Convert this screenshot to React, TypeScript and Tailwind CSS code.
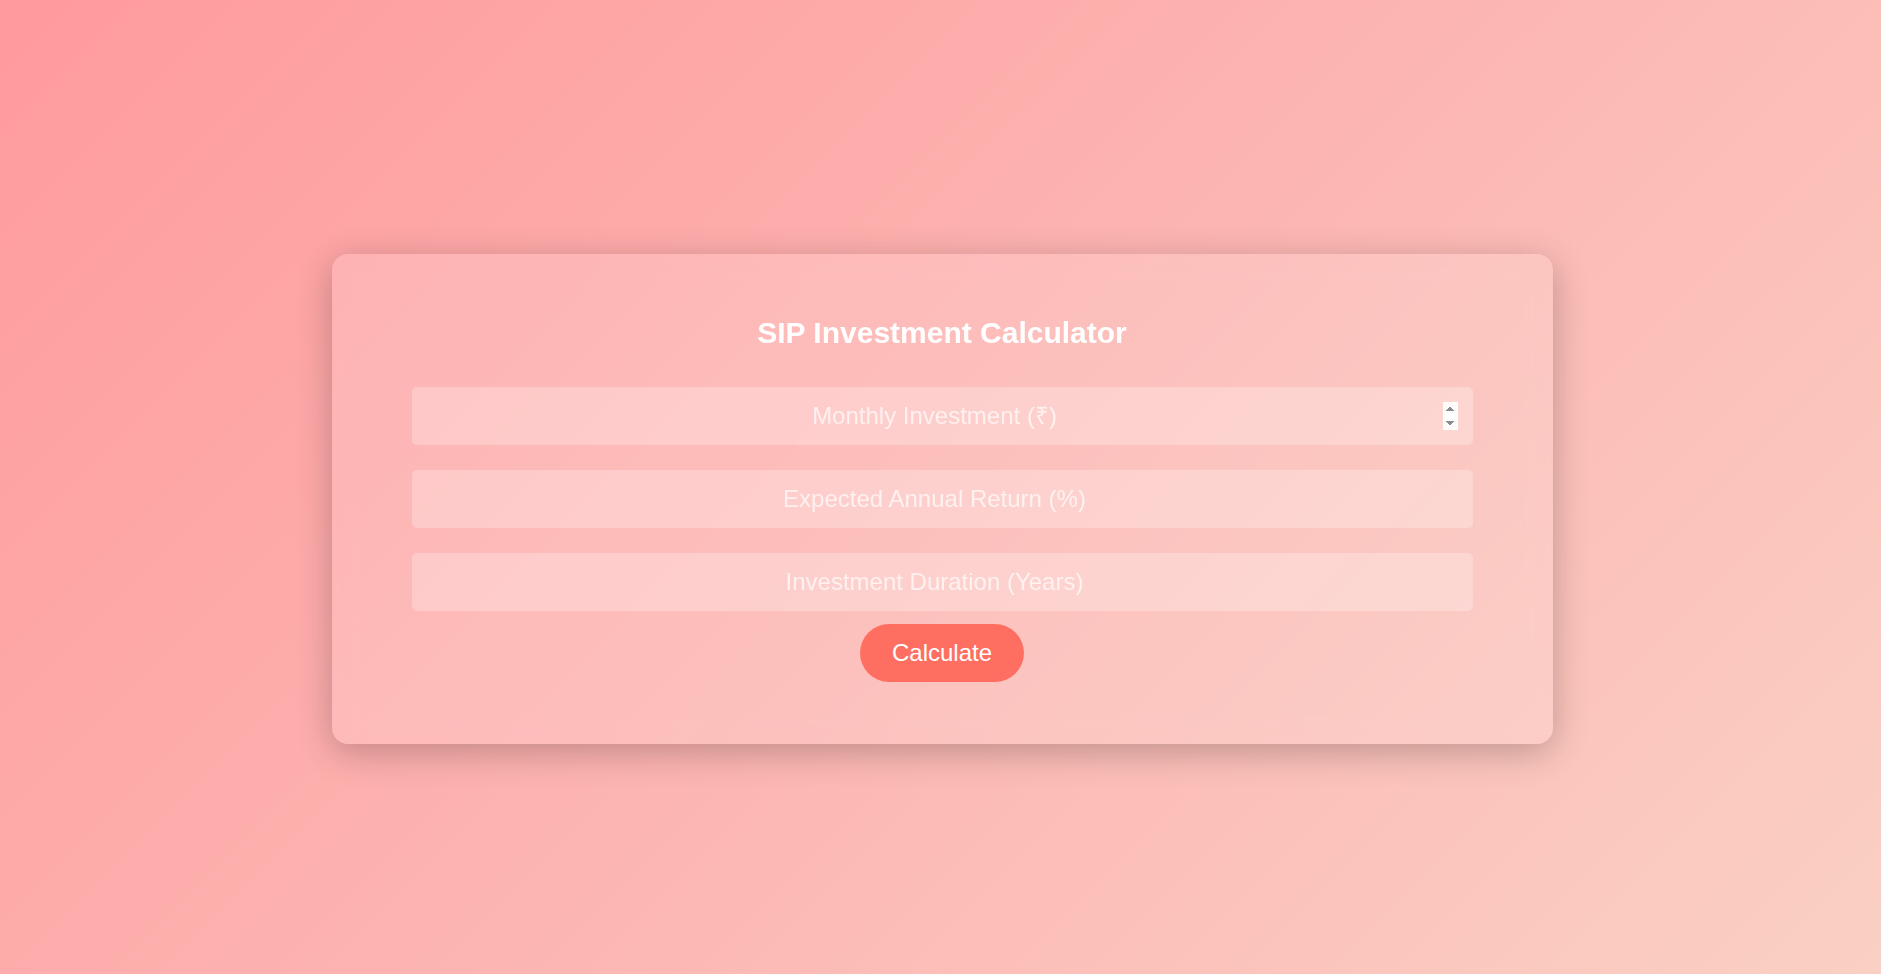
import React from 'react';

const fields = [
  'Monthly Investment (₹)',
  'Expected Annual Return (%)',
  'Investment Duration (Years)',
];

const SipCalculator: React.FC = () => {
  return (
    <div className="min-h-screen w-full bg-[linear-gradient(135deg,#ff9a9e_0%,#fad0c4_100%)] flex items-center justify-center pt-[24px] pl-[3px] font-['Liberation_Sans',Arial,sans-serif]">
      {/* Card */}
      <div className="w-[1221px] rounded-[16px] bg-white/15 backdrop-blur-md shadow-[0_8px_36px_rgba(0,0,0,0.24)] px-[80px] pt-[61px] pb-[62px] flex flex-col items-center">
        <h2 className="text-[30px] leading-[36px] font-bold text-white mb-[36px]">
          SIP Investment Calculator
        </h2>

        <div className="w-full flex flex-col gap-[25.4px]">
          {fields.map((label, i) => (
            <input
              key={label}
              type="number"
              placeholder={label}
              className={`w-full rounded-[5px] border-none outline-none bg-white/25 px-[15px] py-[15px] text-[24px] leading-[27.6px] text-white text-center placeholder:text-white/70 ${
                i === 0 ? '[&::-webkit-inner-spin-button]:opacity-100 [&::-webkit-inner-spin-button]:w-[19px]' : ''
              }`}
            />
          ))}
        </div>

        <button className="mt-[13.4px] rounded-full bg-[#ff6f61] px-[32px] py-[15px] text-[24px] leading-[27.6px] text-white">
          Calculate
        </button>
      </div>
    </div>
  );
};

export default SipCalculator;
